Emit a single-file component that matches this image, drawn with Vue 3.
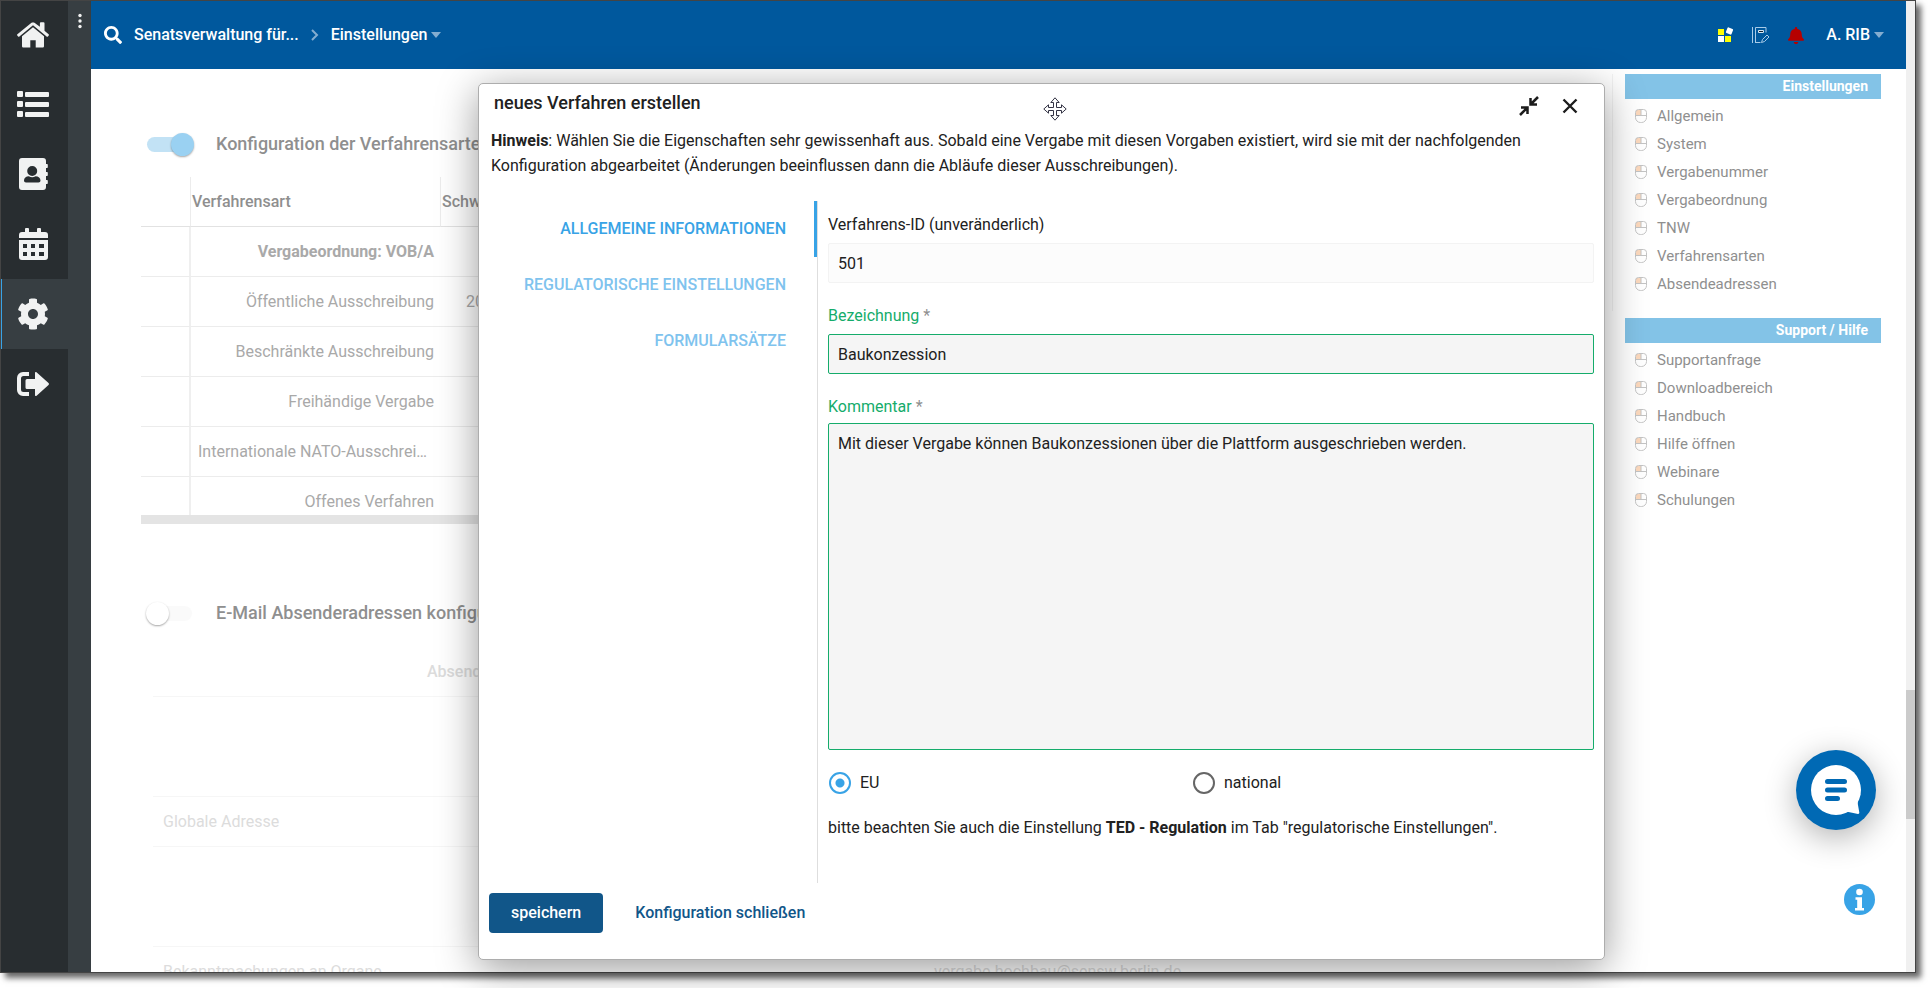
<script setup>
import { ref } from 'vue'

const navItems = [
  { id: 'home', label: 'Startseite' },
  { id: 'list', label: 'Liste' },
  { id: 'contacts', label: 'Adressbuch' },
  { id: 'calendar', label: 'Kalender' },
  { id: 'settings', label: 'Einstellungen' },
  { id: 'logout', label: 'Abmelden' },
]
const activeNav = ref('settings')

const procedures = [
  { name: 'Öffentliche Ausschreibung', limit: '20' },
  { name: 'Beschränkte Ausschreibung', limit: '' },
  { name: 'Freihändige Vergabe', limit: '' },
  { name: 'Internationale NATO-Ausschreibung', limit: '' },
  { name: 'Offenes Verfahren', limit: '' },
]

const senders = [
  { name: '', mail: '', tall: true },
  { name: 'Globale Adresse', mail: '', tall: false },
  { name: '', mail: '', tall: true },
  { name: 'Bekanntmachungen an Organe', mail: 'vergabe.hochbau@sensw.berlin.de', tall: false },
]

const linkGroups = [
  {
    title: 'Einstellungen',
    links: ['Allgemein', 'System', 'Vergabenummer', 'Vergabeordnung', 'TNW', 'Verfahrensarten', 'Absendeadressen'],
  },
  {
    title: 'Support / Hilfe',
    links: ['Supportanfrage', 'Downloadbereich', 'Handbuch', 'Hilfe öffnen', 'Webinare', 'Schulungen'],
  },
]

const tabs = ['Allgemeine Informationen', 'Regulatorische Einstellungen', 'Formularsätze']
const activeTab = ref(0)

const showProcedures = ref(true)
const showSenders = ref(false)
const procedureId = ref('501')
const title = ref('Baukonzession')
const comment = ref('Mit dieser Vergabe können Baukonzessionen über die Plattform ausgeschrieben werden.')
const scope = ref('EU')
</script>

<template>
  <div class="page">
    <div class="frame">
      <nav class="rail" aria-label="Hauptnavigation">
        <button
          v-for="item in navItems"
          :key="item.id"
          type="button"
          class="rail-item"
          :class="{ active: item.id === activeNav }"
          :aria-label="item.label"
          @click="activeNav = item.id"
        >
          <svg width="32" height="32" viewBox="0 0 32 32" fill="currentColor" aria-hidden="true">
            <template v-if="item.id === 'home'">
              <path d="M16 3.300c-.7 0-1.300.2-1.800.6L.4 15.200c-.4.4-.5.9-.1 1.300l.8.9c.3.4.9.4 1.300.1L16 6.300l13.600 11.200c.4.3 1 .3 1.300-.1l.8-.9c.4-.4.300-.9-.1-1.300l-4.100-3.400V4.200a1 1 0 0 0-1-1h-2.600a1 1 0 0 0-1 1v3.500l-5.100-3.800c-.5-.4-1.100-.6-1.800-.6z" />
              <path d="M16 8.200L5 17.300v10a1.200 1.200 0 0 0 1.200 1.200h7.100v-7.300h5.400v7.300h7.100a1.200 1.200 0 0 0 1.200-1.200v-10z" />
            </template>
            <template v-else-if="item.id === 'list'">
              <rect x="0" y="3" width="6" height="6" rx="1" />
              <rect x="0" y="13" width="6" height="6" rx="1" />
              <rect x="0" y="23" width="6" height="6" rx="1" />
              <rect x="8" y="4" width="24" height="5" rx="1" />
              <rect x="8" y="14" width="24" height="5" rx="1" />
              <rect x="8" y="24" width="24" height="5" rx="1" />
            </template>
            <path
              v-else-if="item.id === 'contacts'"
              fill-rule="evenodd"
              d="M5 0h21a3 3 0 0 1 3 3v3h1a.8.8 0 0 1 .8.8v2.400a.8.8 0 0 1-.8.8h-1v4h1a.8.8 0 0 1 .8.8v2.400a.8.8 0 0 1-.8.8h-1v4h1a.8.8 0 0 1 .8.800v2.400a.8.8 0 0 1-.8.8h-1v3a3 3 0 0 1-3 3H5a3 3 0 0 1-3-3V3a3 3 0 0 1 3-3zm10.200 8a5 5 0 1 0 0 10 5 5 0 0 0 0-10zM11.800 18.300c-2.800 0-4.800 1.800-4.800 4.200 0 1.200.8 2 2 2h12.500c1.200 0 2-.8 2-2 0-2.400-2.100-4.200-4.900-4.200-1.200.6-2.200.9-3.400.9s-2.300-.3-3.400-.9z"
            />
            <path
              v-else-if="item.id === 'calendar'"
              fill-rule="evenodd"
              d="M8 1a1 1 0 0 1 1-1h2a1 1 0 0 1 1 1v3h8V1a1 1 0 0 1 1-1h2a1 1 0 0 1 1 1v3h4a3 3 0 0 1 3 3v3H2V7a3 3 0 0 1 3-3h3zM2 12h29v17a3 3 0 0 1-3 3H5a3 3 0 0 1-3-3zm4 4v4h4v-4zm8 0v4h4v-4zm8 0v4h5v-4zM6 24v4h4v-4zm8 0v4h4v-4zm8 0v4h5v-4z"
            />
            <path
              v-else-if="item.id === 'settings'"
              transform="scale(.0625)"
              d="M487.400 315.700l-42.600-24.600c4.300-23.200 4.300-47 0-70.200l42.600-24.600c4.900-2.800 7.100-8.600 5.500-14-11.100-35.600-30-67.800-54.700-94.600-3.800-4.100-10-5.100-14.800-2.300L380.800 110c-17.900-15.400-38.500-27.300-60.800-35.100V25.800c0-5.600-3.900-10.500-9.400-11.700-36.700-8.200-74.300-7.800-109.200 0-5.500 1.200-9.400 6.100-9.400 11.700V75c-22.200 7.900-42.800 19.800-60.800 35.100L88.700 85.500c-4.900-2.800-11-1.900-14.800 2.300-24.700 26.700-43.600 58.900-54.700 94.600-1.700 5.400.6 11.200 5.500 14L67.300 221c-4.300 23.200-4.300 47 0 70.200l-42.600 24.600c-4.900 2.800-7.100 8.600-5.500 14 11.100 35.600 30 67.800 54.700 94.600 3.800 4.100 10 5.100 14.800 2.300l42.600-24.600c17.900 15.400 38.500 27.300 60.800 35.100v49.200c0 5.600 3.900 10.500 9.400 11.700 36.700 8.200 74.300 7.800 109.200 0 5.500-1.200 9.400-6.100 9.400-11.700v-49.200c22.200-7.900 42.800-19.800 60.800-35.100l42.600 24.600c4.900 2.800 11 1.900 14.800-2.300 24.700-26.700 43.600-58.900 54.700-94.600 1.500-5.500-.7-11.300-5.600-14.100zM256 336c-44.100 0-80-35.900-80-80s35.900-80 80-80 80 35.900 80 80-35.900 80-80 80z"
            />
            <template v-else>
              <path d="M12 4H6a6 6 0 0 0-6 6v12a6 6 0 0 0 6 6h6v-4H6.500A2.500 2.500 0 0 1 4 21.500v-11A2.500 2.500 0 0 1 6.500 8H12z" />
              <path d="M19.500 4.300c-.9-.7-1.500-.300-1.500.7V11h-8a1.500 1.500 0 0 0-1.500 1.500v7A1.500 1.500 0 0 0 10 21h8v6c0 1 .8 1.500 1.600.7L31.500 16.900c.6-.6.6-1.200 0-1.800z" />
            </template>
          </svg>
        </button>
      </nav>

      <div class="strip">
        <button type="button" class="more" aria-label="Menü">
          <svg width="4" height="16" viewBox="0 0 4 16" fill="#f1f2f2" aria-hidden="true">
            <circle cx="2" cy="2.500" r="1.700" /><circle cx="2" cy="8" r="1.700" /><circle cx="2" cy="13.500" r="1.700" />
          </svg>
        </button>
      </div>

      <div class="app">
        <header class="topbar">
          <button type="button" class="icon-btn" aria-label="Suche">
            <svg width="18" height="18" viewBox="0 0 512 512" fill="#fff" aria-hidden="true">
              <path d="M505 442.700L405.300 343c-4.500-4.500-10.600-7-17-7H372c27.600-35.300 44-79.700 44-128C416 93.100 322.900 0 208 0S0 93.100 0 208s93.100 208 208 208c48.300 0 92.700-16.400 128-44v16.300c0 6.400 2.500 12.500 7 17l99.700 99.700c9.400 9.400 24.600 9.400 33.900 0l28.300-28.300c9.400-9.400 9.400-24.600.1-34zM208 336c-70.700 0-128-57.200-128-128 0-70.700 57.200-128 128-128 70.700 0 128 57.200 128 128 0 70.700-57.200 128-128 128z" />
            </svg>
          </button>
          <a href="#" class="crumb">Senatsverwaltung für...</a>
          <svg class="crumb-sep" width="8" height="12" viewBox="0 0 8 12" fill="none" stroke="#84add0" stroke-width="2" aria-hidden="true">
            <path d="M1 1l5 5-5 5" />
          </svg>
          <button type="button" class="crumb">
            Einstellungen
            <svg width="10" height="6" viewBox="0 0 10 6" fill="#84add0" aria-hidden="true"><path d="M0 0h10L5 6z" /></svg>
          </button>

          <div class="tools">
            <button type="button" class="icon-btn" aria-label="Anwendungen">
              <svg width="16" height="16" viewBox="0 0 16 16" aria-hidden="true">
                <rect x="0" y="2" width="6" height="6" fill="#ff0" />
                <rect x="0" y="9" width="6" height="6" fill="#fff" />
                <rect x="7" y="9" width="6" height="6" fill="#ff0" />
                <rect x="8.500" y="1" width="6" height="6" rx="1" fill="#fff" transform="rotate(22 11.500 4)" />
              </svg>
            </button>
            <button type="button" class="icon-btn" aria-label="Notizen">
              <svg width="18" height="18" viewBox="0 0 18 18" fill="none" stroke="#a8cbe8" aria-hidden="true">
                <path d="M.5 1v16M3.500 17V1.500h10.500v5M3.500 16.500h5" />
                <path d="M6.500 4.500h5v2h-5z" fill="#123" stroke="#d5e6f3" />
                <path d="M9.500 16.500l1-3 4.500-4.500 2 2-4.500 4.500z" />
              </svg>
            </button>
            <button type="button" class="icon-btn" aria-label="Benachrichtigungen">
              <svg width="16" height="17" viewBox="0 0 448 512" preserveAspectRatio="none" fill="#b50000" aria-hidden="true">
                <path d="M224 512c35.320 0 63.970-28.650 63.970-64H160.030c0 35.350 28.650 64 63.970 64zm215.390-149.710c-19.320-20.760-55.470-51.990-55.470-154.290 0-77.700-54.480-139.900-127.940-155.160V32c0-17.670-14.320-32-31.980-32s-31.980 14.330-31.980 32v20.840C118.560 68.100 64.080 130.300 64.080 208c0 102.300-36.150 133.530-55.470 154.290-6 6.450-8.660 14.160-8.610 21.710.11 16.400 12.980 32 32.100 32h383.800c19.120 0 32-15.600 32.100-32 .05-7.550-2.610-15.270-8.610-21.710z" />
              </svg>
            </button>
            <button type="button" class="crumb">
              A. RIB
              <svg width="10" height="6" viewBox="0 0 10 6" fill="#84add0" aria-hidden="true"><path d="M0 0h10L5 6z" /></svg>
            </button>
          </div>
        </header>

        <div class="body">
          <main class="content">
            <section>
              <label class="section-title">
                <input v-model="showProcedures" type="checkbox" role="switch" class="switch" />
                <span>Konfiguration der Verfahrensarten</span>
              </label>
              <div class="table-clip">
                <table class="procedures">
                  <colgroup><col class="c-mark" /><col class="c-name" /><col class="c-limit" /><col /></colgroup>
                  <thead>
                    <tr><th></th><th>Verfahrensart</th><th>Schwellenwert</th><th></th></tr>
                  </thead>
                  <tbody>
                    <tr><td></td><td class="group">Vergabeordnung: VOB/A</td><td></td><td></td></tr>
                    <tr v-for="row in procedures" :key="row.name">
                      <td></td><td>{{ row.name }}</td><td class="limit">{{ row.limit }}</td><td></td>
                    </tr>
                  </tbody>
                </table>
              </div>
              <div class="hscroll"></div>
            </section>

            <section class="mail-section">
              <label class="section-title">
                <input v-model="showSenders" type="checkbox" role="switch" class="switch" />
                <span>E-Mail Absenderadressen konfigurieren</span>
              </label>
              <table class="senders">
                <thead>
                  <tr><th>Absenderadresse</th><th></th></tr>
                </thead>
                <tbody>
                  <tr v-for="(row, i) in senders" :key="i" :class="{ tall: row.tall }">
                    <td>{{ row.name }}</td><td class="mail">{{ row.mail }}</td>
                  </tr>
                </tbody>
              </table>
            </section>
          </main>

          <aside class="side">
            <section v-for="group in linkGroups" :key="group.title" class="side-group">
              <h2>{{ group.title }}</h2>
              <ul>
                <li v-for="link in group.links" :key="link">
                  <a href="#">
                    <svg width="12" height="14" viewBox="0 0 12 14" fill="none" stroke="#c4c4c4" aria-hidden="true">
                      <path d="M1 1h5v5H1z" fill="#fcd9bd" stroke="none" />
                      <path d="M3.500.500h5a3 3 0 0 1 3 3v5a5 5 0 0 1-5 5h-1a5 5 0 0 1-5-5v-5a3 3 0 0 1 3-3zM.5 6.500h11M6 .5v6" />
                    </svg>
                    {{ link }}
                  </a>
                </li>
              </ul>
            </section>
          </aside>
        </div>
      </div>

      <div class="scrollbar"><div class="thumb"></div></div>

      <section class="dialog" role="dialog" aria-labelledby="dialog-title">
        <header class="dialog-head">
          <h1 id="dialog-title">neues Verfahren erstellen</h1>
          <div class="dialog-actions">
            <button type="button" class="icon-btn" aria-label="Verkleinern">
              <svg width="20" height="20" viewBox="0 0 20 20" fill="none" stroke="#1c1c1c" stroke-width="2.500" aria-hidden="true">
                <path d="M19 1l-7 7M11.500 2v6.500H18M1 19l7-7M2 11.500h6.500V18" />
              </svg>
            </button>
            <button type="button" class="icon-btn" aria-label="Schließen">
              <svg width="16" height="16" viewBox="0 0 16 16" fill="none" stroke="#1c1c1c" stroke-width="2.400" aria-hidden="true">
                <path d="M1.500 1.500l13 13M14.500 1.500l-13 13" />
              </svg>
            </button>
          </div>
        </header>
        <p class="hint">
          <strong>Hinweis</strong>: Wählen Sie die Eigenschaften sehr gewissenhaft aus. Sobald eine Vergabe mit diesen
          Vorgaben existiert, wird sie mit der nachfolgenden Konfiguration abgearbeitet (Änderungen beeinflussen dann die
          Abläufe dieser Ausschreibungen).
        </p>

        <div class="dialog-body">
          <div class="tabs" role="tablist">
            <button
              v-for="(tab, i) in tabs"
              :key="tab"
              type="button"
              role="tab"
              class="tab"
              :class="{ active: i === activeTab }"
              :aria-selected="i === activeTab"
              @click="activeTab = i"
            >
              {{ tab }}
            </button>
          </div>
          <form class="form" @submit.prevent>
            <div class="field">
              <label for="pid">Verfahrens-ID (unveränderlich)</label>
              <input id="pid" v-model="procedureId" type="text" readonly />
            </div>
            <div class="field required">
              <label for="name">Bezeichnung <i>*</i></label>
              <input id="name" v-model="title" type="text" />
            </div>
            <div class="field required grow">
              <label for="comment">Kommentar <i>*</i></label>
              <textarea id="comment" v-model="comment"></textarea>
            </div>
            <div class="radios">
              <label><input v-model="scope" type="radio" name="scope" value="EU" />EU</label>
              <label><input v-model="scope" type="radio" name="scope" value="national" />national</label>
            </div>
            <p class="note">
              bitte beachten Sie auch die Einstellung <strong>TED - Regulation</strong> im Tab "regulatorische
              Einstellungen".
            </p>
          </form>
        </div>

        <footer class="dialog-foot">
          <button type="button" class="primary">speichern</button>
          <button type="button" class="text-btn">Konfiguration schließen</button>
        </footer>

        <svg class="cursor" width="24" height="24" viewBox="0 0 24 24" fill="#fff" stroke="#333344" aria-hidden="true">
          <path d="M12 .8l4.200 4.700h-2.700v5h5V7.800l4.700 4.200-4.700 4.200v-2.700h-5v5h2.700L12 23.200l-4.200-4.700h2.700v-5h-5v2.700L.8 12l4.700-4.200v2.700h5v-5H7.800z" />
        </svg>
      </section>

      <button type="button" class="chat" aria-label="Chat">
        <svg width="80" height="80" viewBox="0 0 80 80" aria-hidden="true">
          <circle cx="40" cy="40" r="25" fill="#fff" />
          <path d="M64.500 44c-2 4-3.200 7-2.600 10.500l1.400 8c.1.900-.5 1.500-1.300 1.400l-9.500-1.900c-3-.4-6 1-9.500 2z" fill="#fff" />
          <path d="M31.500 31.500h17M31.500 40h17M31.500 48.500h10" stroke="#0069b4" stroke-width="5" stroke-linecap="round" />
        </svg>
      </button>

      <button type="button" class="info" aria-label="Information">
        <svg width="31" height="31" viewBox="0 0 31 31" aria-hidden="true">
          <circle cx="15.500" cy="15.500" r="15.500" fill="#38a3e6" />
          <circle cx="15.500" cy="8" r="3.300" fill="#fff" />
          <path d="M11.500 13.200h6.500v10.800h2v2.500h-9v-2.500h2.200v-8.300h-1.700z" fill="#fff" />
        </svg>
      </button>
    </div>
  </div>
</template>

<style>
body {
  background: #fff;
}
</style>

<style scoped>
.page,
.page * {
  box-sizing: border-box;
}
.page {
  height: 100vh;
  padding: 0 15px 15px 0;
  overflow: hidden;
  font-family: Roboto, "Liberation Sans", sans-serif;
  font-size: 16px;
  line-height: 24px;
  color: #212121;
}
button,
input,
textarea {
  font: inherit;
  color: inherit;
}
button {
  border: 0;
  padding: 0;
  background: none;
  cursor: pointer;
}
a {
  color: inherit;
  text-decoration: none;
}
svg {
  display: block;
  flex: none;
}
.frame {
  position: relative;
  height: 100%;
  display: flex;
  border: 1px solid #444;
  background: #fff;
  box-shadow: 5px 5px 6px rgba(0, 0, 0, 0.6);
}

/* left rail */
.rail {
  flex: none;
  width: 67px;
  display: flex;
  flex-direction: column;
  background: #282d30;
}
.rail-item {
  height: 70px;
  display: flex;
  align-items: center;
  justify-content: center;
  padding-right: 3px;
  color: #f1f2f2;
}
.rail-item:first-child {
  height: 68px;
}
.rail-item.active {
  background: #373e42;
  box-shadow: inset 1px 0 #38a3e6;
}
.strip {
  flex: none;
  width: 23px;
  background: #373e42;
}
.more {
  display: block;
  width: 100%;
  padding: 12px 10px;
}

/* top bar */
.app {
  flex: 1;
  min-width: 0;
  display: flex;
  flex-direction: column;
  overflow: hidden;
}
.topbar {
  flex: none;
  height: 68px;
  display: flex;
  align-items: center;
  padding: 0 22px 0 13px;
  background: #00589d;
  color: #fff;
}
.crumb {
  display: flex;
  align-items: center;
  gap: 4px;
  font-weight: 500;
}
.topbar > a.crumb {
  margin-left: 12px;
}
.crumb-sep {
  margin: 0 12px;
}
.tools {
  margin-left: auto;
  display: flex;
  align-items: center;
  gap: 18px;
}
.tools .crumb {
  margin-left: 4px;
}

/* page content */
.body {
  flex: 1;
  min-height: 0;
  display: flex;
}
.content {
  flex: 1;
  min-width: 0;
  padding: 61px 40px 0 50px;
}
.section-title {
  display: flex;
  align-items: center;
  height: 28px;
  gap: 24px;
  padding-left: 6px;
  font-size: 18px;
  font-weight: 500;
  color: #8f8f8f;
}
.switch {
  appearance: none;
  position: relative;
  width: 45px;
  height: 15px;
  margin: 0;
  border-radius: 8px;
  background: #fafafa;
}
.switch::before {
  content: "";
  position: absolute;
  left: -1px;
  top: -4px;
  width: 23px;
  height: 23px;
  border-radius: 50%;
  background: #fff;
  box-shadow: 0 1px 2px rgba(0, 0, 0, 0.35);
}
.switch:checked {
  background: #c2e2f5;
}
.switch:checked::before {
  left: 24px;
  background: #9ad1f2;
}
.table-clip {
  height: 357px;
  padding-top: 19px;
  overflow: hidden;
}
table {
  width: 100%;
  table-layout: fixed;
  border-collapse: separate;
  border-spacing: 0;
}
.c-mark {
  width: 50px;
}
.c-name {
  width: 250px;
}
.c-limit {
  width: 120px;
}
.procedures th,
.procedures td {
  height: 50px;
  padding: 0 7px;
  border-bottom: 1px solid #ececec;
  text-align: right;
  color: #a9a9a9;
  white-space: nowrap;
  overflow: hidden;
  text-overflow: ellipsis;
}
.procedures th {
  padding: 0 1px;
  border-right: 1px solid #ececec;
  border-bottom-color: #e2e2e2;
  text-align: left;
  font-weight: 500;
  color: #8f8f8f;
}
.procedures td:first-child {
  border-right: 2px solid #efefef;
}
.procedures td.group {
  font-weight: 700;
}
.procedures td.limit {
  padding-left: 25px;
  text-align: left;
}
.hscroll {
  height: 9px;
  background: #e4e4e4;
}
.mail-section {
  padding-top: 75px;
}
.senders {
  width: calc(100% - 12px);
  margin: 20px 0 0 12px;
}
.senders th,
.senders td {
  height: 50px;
  padding: 0 10px;
  border-bottom: 1px solid #f6f6f6;
  text-align: left;
  color: #dcdcdc;
}
.senders th {
  padding-left: 274px;
  font-weight: 500;
}
.senders .tall td {
  height: 100px;
}
.senders td.mail {
  padding-left: 72px;
}

/* link column */
.side {
  flex: none;
  width: 295px;
  padding: 5px 25px 0 1px;
}
.side-group {
  margin-bottom: 7px;
  padding: 0 0 13px 12px;
  border-left: 1px solid transparent;
}
.side-group:first-child {
  border-left-color: #f3f3f3;
}
.side h2 {
  margin: 0;
  padding: 0 13px;
  font-size: 14px;
  line-height: 25px;
  font-weight: 700;
  text-align: right;
  color: #fff;
  background: #83c3e7;
}
.side ul {
  margin: 0;
  padding: 3px 0 0 10px;
  list-style: none;
}
.side li a {
  display: flex;
  align-items: center;
  gap: 10px;
  font-size: 15px;
  line-height: 28px;
  color: #8f8f8f;
}
.scrollbar {
  flex: none;
  width: 9px;
  display: flex;
  flex-direction: column;
  background: #f0f0f0;
}
.thumb {
  height: 129px;
  margin-top: auto;
  margin-bottom: 153px;
  background: #cbcbcb;
}

/* dialog */
.dialog {
  position: absolute;
  top: 82px;
  left: 477px;
  right: 310px;
  bottom: 12px;
  display: flex;
  flex-direction: column;
  border: 1px solid #adadad;
  border-radius: 5px;
  background: #fff;
  box-shadow: 0 8px 40px rgba(0, 0, 0, 0.4);
}
.dialog-head {
  display: flex;
  justify-content: space-between;
  height: 44px;
  padding: 7px 26px 0 15px;
}
.dialog-head h1 {
  margin: 0;
  font-size: 18px;
  font-weight: 500;
}
.dialog-actions {
  display: flex;
  align-items: center;
  gap: 23px;
  height: 30px;
}
.hint {
  margin: 0;
  padding: 0 40px 0 12px;
  line-height: 25px;
}
strong {
  font-weight: 700;
}
.dialog-body {
  flex: 1;
  min-height: 0;
  display: flex;
  margin-top: 23px;
}
.tabs {
  flex: none;
  width: 339px;
  display: flex;
  flex-direction: column;
  border-right: 1px solid #dedede;
}
.tab {
  height: 56px;
  padding-right: 28px;
  border-right: 3px solid transparent;
  text-align: right;
  text-transform: uppercase;
  font-weight: 500;
  color: #7fc3ee;
}
.tab.active {
  border-right-color: #38a3e6;
  color: #38a3e6;
}
.form {
  flex: 1;
  min-width: 0;
  display: flex;
  flex-direction: column;
  padding: 12px 10px 43px;
}
.field {
  display: flex;
  flex-direction: column;
  gap: 6px;
  margin-bottom: 21px;
}
.field label {
  line-height: 24px;
}
.field input,
.field textarea {
  display: block;
  width: 100%;
  height: 40px;
  padding: 0 9px;
  border: 1px solid #f3f3f3;
  border-radius: 2px;
  background: #fcfcfc;
}
.field.required label {
  color: #15ac6b;
}
.field label i {
  font-style: normal;
  color: #8f8f8f;
}
.field.required input,
.field.required textarea {
  border-color: #15ac6b;
  background: #f5f5f5;
}
.field.grow {
  flex: 1;
  gap: 4px;
}
.field.grow textarea {
  flex: 1;
  padding: 8px 9px;
  resize: none;
}
.radios {
  display: grid;
  grid-template-columns: 364px 1fr;
}
.radios label {
  display: flex;
  align-items: center;
  gap: 9px;
}
.radios input {
  appearance: none;
  width: 22px;
  height: 22px;
  margin: 0 0 0 1px;
  border: 2px solid #666;
  border-radius: 50%;
}
.radios input:checked {
  border-color: #38a3e6;
  background: radial-gradient(circle, #38a3e6 0 4px, transparent 5px);
}
.note {
  margin: 21px 0 0;
}
.dialog-foot {
  display: flex;
  gap: 32px;
  padding: 10px 10px 26px;
}
.primary {
  height: 40px;
  padding: 0 22px;
  border-radius: 4px;
  background: #115689;
  color: #fff;
  font-weight: 500;
}
.text-btn {
  color: #115689;
  font-weight: 500;
}
.cursor {
  position: absolute;
  left: 564px;
  top: 13px;
}
.chat,
.info {
  position: absolute;
  border-radius: 50%;
}
.chat {
  right: 39px;
  bottom: 142px;
  background: #0069b4;
  box-shadow: 0 8px 32px rgba(0, 0, 0, 0.3);
}
.info {
  right: 40px;
  bottom: 57px;
}
</style>
